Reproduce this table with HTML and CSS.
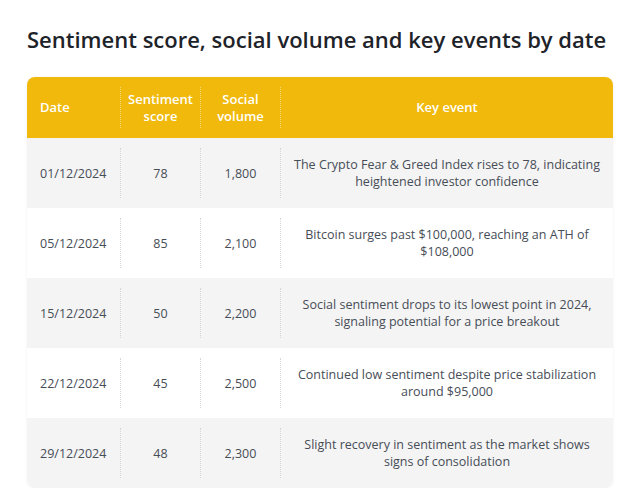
FILE: index.html
```html
<!DOCTYPE html>
<html lang="en">
<head>
<meta charset="utf-8">
<title>Sentiment score, social volume and key events by date</title>
<link rel="stylesheet" href="styles.css">
</head>
<body>
<main class="page">
  <h1 class="title">Sentiment score, social volume and key events by date</h1>
  <div class="table">
    <div class="row head">
      <div class="cell c-date">Date</div>
      <div class="cell c-mid sep">Sentiment<br>score</div>
      <div class="cell c-mid sep">Social<br>volume</div>
      <div class="cell c-event sep">Key event</div>
    </div>
    <div class="row alt">
      <div class="cell c-date">01/12/2024</div>
      <div class="cell c-mid sep">78</div>
      <div class="cell c-mid sep">1,800</div>
      <div class="cell c-event sep">The Crypto Fear &amp; Greed Index rises to 78, indicating heightened investor confidence</div>
    </div>
    <div class="row">
      <div class="cell c-date">05/12/2024</div>
      <div class="cell c-mid sep">85</div>
      <div class="cell c-mid sep">2,100</div>
      <div class="cell c-event sep">Bitcoin surges past $100,000, reaching an ATH of $108,000</div>
    </div>
    <div class="row alt">
      <div class="cell c-date">15/12/2024</div>
      <div class="cell c-mid sep">50</div>
      <div class="cell c-mid sep">2,200</div>
      <div class="cell c-event sep">Social sentiment drops to its lowest point in 2024, signaling potential for a price breakout</div>
    </div>
    <div class="row">
      <div class="cell c-date">22/12/2024</div>
      <div class="cell c-mid sep">45</div>
      <div class="cell c-mid sep">2,500</div>
      <div class="cell c-event sep">Continued low sentiment despite price stabilization around $95,000</div>
    </div>
    <div class="row alt last">
      <div class="cell c-date">29/12/2024</div>
      <div class="cell c-mid sep">48</div>
      <div class="cell c-mid sep">2,300</div>
      <div class="cell c-event sep">Slight recovery in sentiment as the market shows signs of consolidation</div>
    </div>
  </div>
</main>
</body>
</html>
```
FILE: styles.css
```css
* { box-sizing: border-box; }
html, body { margin: 0; padding: 0; background: #ffffff; }
body {
  font-family: "Open Sans", "Noto Sans", sans-serif;
  color: #474d57;
}
.page {
  padding: 24px 27px 0 27px;
}
.title {
  margin: 0 0 23px 0;
  font-size: 22px;
  line-height: 30px;
  font-weight: 600;
  color: #1e2329;
  letter-spacing: 0;
  white-space: nowrap;
}
.table {
  width: 586px;
  border-radius: 8px;
  overflow: hidden;
  box-shadow: 0 0 3px rgba(0, 0, 0, 0.06);
}
.row {
  display: grid;
  grid-template-columns: 93px 80px 80px 1fr;
  min-height: 70px;
  background: #ffffff;
}
.row.alt { background: #f4f4f4; }
.row.head {
  background: #f0b90b;
  min-height: 61px;
  color: #ffffff;
  font-weight: 600;
}
.cell {
  margin: 10px 0;
  display: flex;
  align-items: center;
  font-size: 12.5px;
  line-height: 17px;
}
.head .cell {
  font-size: 13px;
  line-height: 17px;
}
.sep { border-left: 1px dotted #d6d6d6; }
.head .sep { border-left: 1px dotted rgba(255, 255, 255, 0.45); }
.c-date { padding-left: 13px; }
.c-mid { justify-content: center; text-align: center; }
.c-event {
  justify-content: center;
  text-align: center;
  padding: 0 8px;
}
```
